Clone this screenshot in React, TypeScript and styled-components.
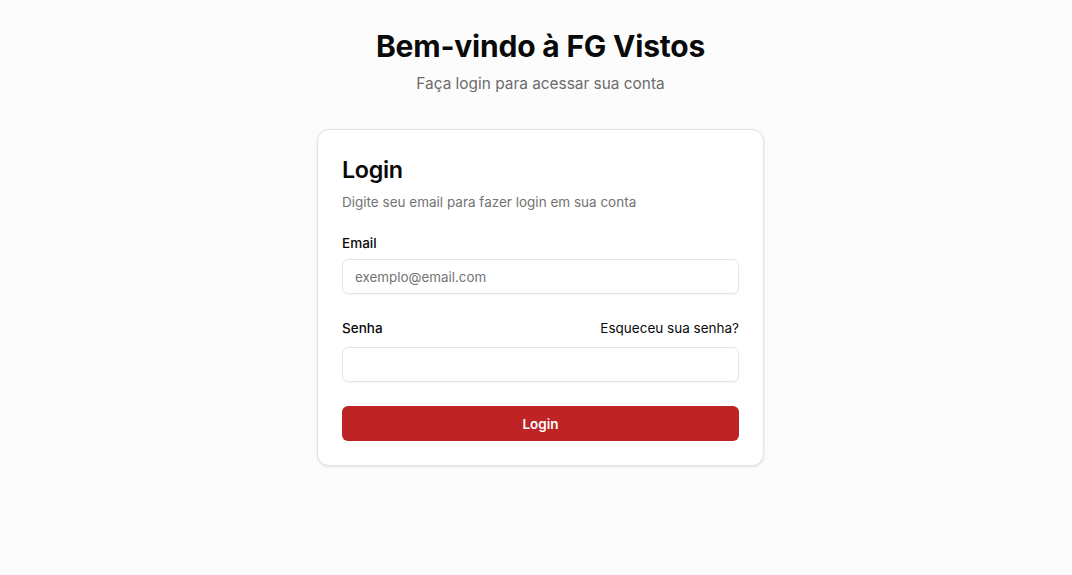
import styled, { createGlobalStyle } from "styled-components";

const GlobalStyle = createGlobalStyle`
  * {
    box-sizing: border-box;
  }
  body {
    margin: 0;
    background: #fcfcfc;
    font-family: Inter, "Noto Sans", sans-serif;
    color: #0a0a0a;
  }
`;

const App = () => {
  return (
    <>
      <GlobalStyle />
      <Page>
        <Header>
          <Title>Bem-vindo à FG Vistos</Title>
          <Subtitle>Faça login para acessar sua conta</Subtitle>
        </Header>
        <Card>
          <CardTitle>Login</CardTitle>
          <CardDescription>
            Digite seu email para fazer login em sua conta
          </CardDescription>
          <Form onSubmit={(e) => e.preventDefault()}>
            <Field>
              <Label htmlFor="email">Email</Label>
              <Input id="email" type="email" placeholder="exemplo@email.com" />
            </Field>
            <Field>
              <LabelRow>
                <Label htmlFor="senha">Senha</Label>
                <ForgotLink href="#">Esqueceu sua senha?</ForgotLink>
              </LabelRow>
              <Input id="senha" type="password" />
            </Field>
            <SubmitButton type="submit">Login</SubmitButton>
          </Form>
        </Card>
      </Page>
    </>
  );
};

const Page = styled.main`
  width: 100%;
  min-height: 575px;
  padding: 28px 0 0 9px;
  display: flex;
  flex-direction: column;
  align-items: center;
`;

const Header = styled.header`
  display: flex;
  flex-direction: column;
  align-items: center;
  gap: 8px;
  margin-bottom: 33px;
`;

const Title = styled.h1`
  margin: 0;
  font-size: 30px;
  line-height: 36px;
  font-weight: 700;
  letter-spacing: -0.2px;
  color: #0a0a0a;
`;

const Subtitle = styled.p`
  margin: 0;
  font-size: 15.4px;
  line-height: 24px;
  color: #6b6b6b;
`;

const Card = styled.section`
  width: 447px;
  background: #ffffff;
  border: 1px solid #e4e4e4;
  border-radius: 12px;
  box-shadow: 0 1px 3px rgba(0, 0, 0, 0.08), 0 1px 2px rgba(0, 0, 0, 0.04);
  padding: 24px 24px 24px;
`;

const CardTitle = styled.h2`
  margin: 0;
  font-size: 23.3px;
  line-height: 32px;
  font-weight: 600;
  letter-spacing: -0.3px;
`;

const CardDescription = styled.p`
  margin: 6px 0 0;
  font-size: 13.5px;
  line-height: 20px;
  color: #737373;
`;

const Form = styled.form`
  margin-top: 21px;
  display: flex;
  flex-direction: column;
  gap: 24px;
`;

const Field = styled.div`
  display: flex;
  flex-direction: column;
  gap: 6px;
`;

const LabelRow = styled.div`
  height: 23px;
  display: flex;
  justify-content: space-between;
  align-items: flex-start;
`;

const Label = styled.label`
  font-size: 13.5px;
  line-height: 20px;
  font-weight: 500;
  color: #0a0a0a;
`;

const ForgotLink = styled.a`
  font-size: 13.5px;
  line-height: 20px;
  color: #0a0a0a;
  text-decoration: none;
`;

const Input = styled.input`
  width: 100%;
  height: 35px;
  padding: 4px 12px;
  border: 1px solid #e5e5e5;
  border-radius: 6px;
  background: #ffffff;
  font-family: inherit;
  font-size: 13.4px;
  color: #0a0a0a;
  box-shadow: 0 1px 2px rgba(0, 0, 0, 0.04);
  outline: none;

  &::placeholder {
    color: #737373;
  }
`;

const SubmitButton = styled.button`
  width: 100%;
  height: 35px;
  border: none;
  border-radius: 6px;
  background: #be2325;
  color: #ffffff;
  font-family: inherit;
  font-size: 13.5px;
  font-weight: 600;
  cursor: pointer;
`;

export default App;
